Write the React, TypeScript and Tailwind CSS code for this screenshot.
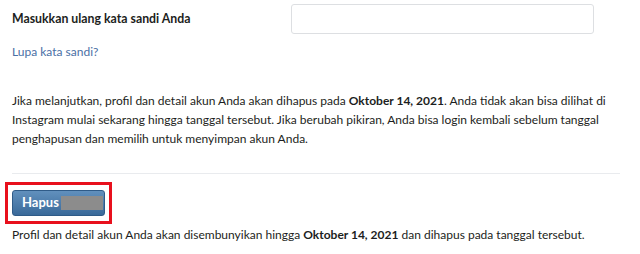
export default function App() {
  return (
    <div className="h-[254px] w-[640px] overflow-hidden bg-white text-[12px] text-[#1c1e21] font-['Lato',sans-serif]">
      <div className="pl-3 pr-5">
        {/* Password row */}
        <div className="flex items-center pt-1">
          <span className="w-[279px] text-[12.3px] font-bold">Masukkan ulang kata sandi Anda</span>
          <input type="password" className="h-[30px] w-[303px] rounded-[3px] border border-[#dddfe2] bg-white outline-none" />
        </div>
        <a href="#" className="mt-[9px] block leading-[18px] text-[#4a6fa5]">Lupa kata sandi?</a>

        <p className="mt-[30px] whitespace-nowrap leading-[19px]">
          Jika melanjutkan, profil dan detail akun Anda akan dihapus pada <b>Oktober 14, 2021</b>. Anda tidak akan bisa dilihat di
          <br />
          Instagram mulai sekarang hingga tanggal tersebut. Jika berubah pikiran, Anda bisa login kembali sebelum tanggal
          <br />
          penghapusan dan memilih untuk menyimpan akun Anda.
        </p>

        <div className="mt-[25px] h-px bg-[#e9ebee]" />

        <div className="ml-[-7px] mt-[8px] inline-flex border-[3px] border-[#e8101d] px-[4px] py-[5px]">
          <button className="flex h-[26px] w-[93px] items-center rounded-[3px] border border-[#2f5b88] bg-gradient-to-b from-[#6190bd] to-[#3a6a9a] pl-[9px] text-[13px] font-bold text-white">
            Hapus
            <span className="ml-[2px] h-[14px] w-[42px] bg-[#8c8c8c]" />
          </button>
        </div>

        <p className="mt-[2px] whitespace-nowrap leading-[18px]">
          Profil dan detail akun Anda akan disembunyikan hingga <b>Oktober 14, 2021</b> dan dihapus pada tanggal tersebut.
        </p>
      </div>
    </div>
  );
}
